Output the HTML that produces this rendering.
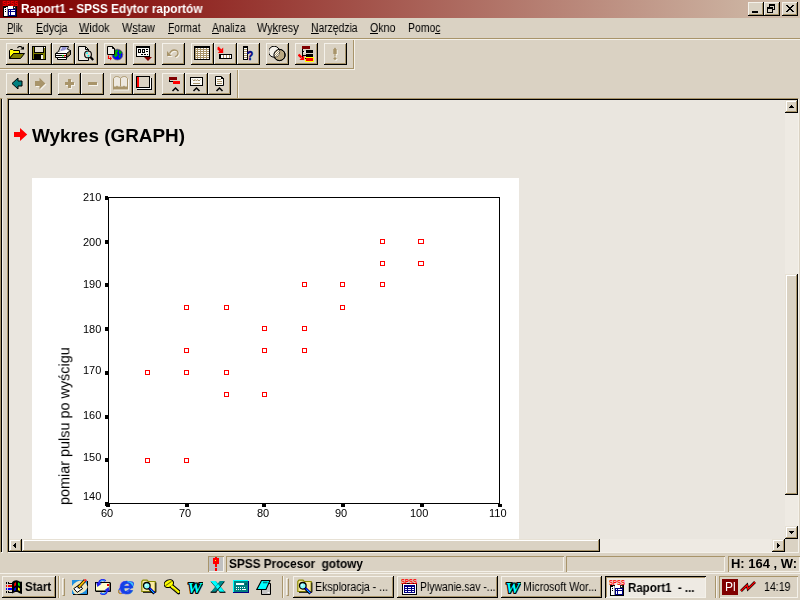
<!DOCTYPE html><html><head><meta charset="utf-8"><title>Raport1 - SPSS Edytor raportów</title><style>
*{margin:0;padding:0;box-sizing:border-box}
html,body{width:800px;height:600px;overflow:hidden;background:#DAD2C3;font-family:"Liberation Sans", sans-serif;font-size:12px;color:#000}
.a{position:absolute}
.t{position:absolute;white-space:pre;transform-origin:0 0;line-height:1;will-change:transform}
.rb{position:absolute;background:#DAD2C3;box-shadow:inset -1px -1px 0 #000000,inset 1px 1px 0 #F4F1EA,inset -2px -2px 0 #A8946A}
.sb{position:absolute;background:#DAD2C3;box-shadow:inset -1px -1px 0 #000000,inset 1px 1px 0 #E7E1D5,inset -2px -2px 0 #A8946A,inset 2px 2px 0 #fff}
.sk{position:absolute;box-shadow:inset 1px 1px 0 #A8946A,inset -1px -1px 0 #F4F1EA}
.tb{position:absolute;width:23px;height:22px;background:#DAD2C3;box-shadow:inset -1px -1px 0 #000000,inset 1px 1px 0 #F4F1EA,inset -2px -2px 0 #A8946A}
.tb svg{position:absolute;left:3px;top:3px}
.h{position:absolute;height:1px}
.v{position:absolute;width:1px}
u{position:relative;text-decoration:none}
u::after{content:"";position:absolute;left:0;right:0;top:11.9px;height:1px;background:#000}
</style></head><body>
<div class="a" style="left:0;top:0;width:800px;height:18px;background:linear-gradient(to right,#800000 0,#800000 32px,#D1BFAC 800px)"></div>
<svg class="a" style="left:2px;top:1px" width="16" height="16"><g shape-rendering="crispEdges"><rect x="1" y="5" width="14" height="11" fill="#000"/><rect x="2" y="6" width="3" height="9" fill="#fff"/><rect x="5" y="6" width="1" height="9" fill="#9A9A9A"/><rect x="6" y="5" width="5" height="3" fill="#fff"/><rect x="11" y="5" width="3" height="3" fill="#222"/><rect x="12" y="6" width="1" height="1" fill="#fff"/><rect x="3" y="8" width="1" height="1" fill="#000"/><rect x="3" y="10" width="1" height="1" fill="#000"/><rect x="2" y="6" width="2" height="1" fill="#000"/><rect x="6" y="8" width="8" height="7" fill="#000080"/><rect x="7" y="9" width="1" height="1" fill="#fff"/><rect x="9" y="9" width="4" height="1" fill="#fff"/><rect x="7" y="11" width="1" height="3" fill="#fff"/><rect x="9" y="11" width="4" height="3" fill="#fff"/></g><text x="0" y="5" font-family="Liberation Sans, sans-serif" font-weight="bold" font-size="6.5" fill="#f00" textLength="16" lengthAdjust="spacingAndGlyphs">SPSS</text></svg>
<div class="rb" style="left:748px;top:2px;width:16px;height:14px"></div>
<div class="rb" style="left:764px;top:2px;width:16px;height:14px"></div>
<div class="rb" style="left:782px;top:2px;width:16px;height:14px"></div>
<div class="a" style="left:752px;top:11px;width:6px;height:2px;background:#000"></div>
<svg class="a" style="left:764px;top:2px" width="16" height="14" shape-rendering="crispEdges" fill="#000"><rect x="5" y="2" width="6" height="2"/><rect x="10" y="2" width="1" height="6"/><rect x="5" y="2" width="1" height="3"/><rect x="9" y="7" width="2" height="1"/><rect x="3" y="5" width="6" height="2"/><rect x="3" y="5" width="1" height="6"/><rect x="8" y="5" width="1" height="6"/><rect x="3" y="10" width="6" height="1"/></svg>
<svg class="a" style="left:782px;top:2px" width="16" height="14" shape-rendering="crispEdges" fill="#000"><rect x="4" y="3" width="2" height="1"/><rect x="10" y="3" width="2" height="1"/><rect x="5" y="4" width="2" height="1"/><rect x="9" y="4" width="2" height="1"/><rect x="6" y="5" width="4" height="1"/><rect x="7" y="6" width="2" height="1"/><rect x="6" y="7" width="4" height="1"/><rect x="5" y="8" width="2" height="1"/><rect x="9" y="8" width="2" height="1"/><rect x="4" y="9" width="2" height="1"/><rect x="10" y="9" width="2" height="1"/></svg>
<div class="h" style="left:0;top:38px;width:800px;background:#A8946A"></div>
<div class="h" style="left:0;top:39px;width:800px;background:#F4F1EA"></div>
<div class="h" style="left:0;top:68px;width:354px;background:#A8946A"></div>
<div class="h" style="left:0;top:69px;width:355px;background:#F4F1EA"></div>
<div class="v" style="left:353px;top:40px;height:29px;background:#A8946A"></div>
<div class="v" style="left:354px;top:40px;height:30px;background:#F4F1EA"></div>
<div class="v" style="left:237px;top:70px;height:28px;background:#A8946A"></div>
<div class="v" style="left:238px;top:70px;height:28px;background:#F4F1EA"></div>
<div class="tb" style="left:6px;top:43px"><svg width="17" height="17" viewBox="0 0 17 17"><path d="M0.5 12.5V4.5L1.5 3.5H3.5L4.5 4.5H10.5V7.5H4.5Z" fill="#ff0" stroke="#000"/><path d="M0.5 12.5L4.5 7.5H15.5L11.5 12.5Z" fill="#808000" stroke="#000"/><path d="M8.5 2C9.5 -0.2 12.8 -0.2 13.6 2.6" stroke="#000" fill="none" stroke-width="1.1"/><path d="M11.3 3.6H15V0.4Z" fill="#000"/></svg></div>
<div class="tb" style="left:29px;top:43px"><svg width="17" height="17" viewBox="0 0 17 17" shape-rendering="crispEdges"><rect x="0" y="0" width="14" height="14" fill="#000"/><rect x="1" y="1" width="12" height="12" fill="#808000"/><rect x="3" y="1" width="8" height="6" fill="#E6E0D4"/><rect x="2" y="1" width="1" height="6" fill="#000"/><rect x="11" y="1" width="1" height="6" fill="#000"/><rect x="2" y="6" width="10" height="1" fill="#000"/><rect x="3" y="8" width="8" height="5" fill="#000"/><rect x="9" y="9" width="2" height="4" fill="#F4F0E8"/><rect x="12" y="1" width="1" height="1" fill="#fff"/><rect x="2" y="8" width="1" height="5" fill="#000"/></svg></div>
<div class="tb" style="left:52px;top:43px"><svg width="17" height="17" viewBox="0 0 17 17"><path d="M5.5 0.5H13.5L11.5 5.5H3.5Z" fill="#fff" stroke="#000"/><path d="M6.6 2H11.6M5.6 4H10.6" stroke="#1010A0" stroke-width="0.9"/><path d="M3.5 5.5L0.5 7.5V11.5H2.5V13.5H11.5V11.5L15.5 8.5V4.5L13 3.5" fill="#fff" stroke="#000"/><path d="M11.5 11.5V7.5L15.5 4.5V8.5Z" fill="#8A7850" stroke="#000"/><path d="M0.5 7.5H11.5M1 9.5H11M2.5 11.5H11.5" stroke="#000"/><rect x="7" y="9" width="1.5" height="1.5" fill="#0c0"/><rect x="9" y="9" width="1.5" height="1.5" fill="#f00"/></svg></div>
<div class="tb" style="left:75px;top:43px"><svg width="17" height="17" viewBox="0 0 17 17"><path d="M0.5 0.5H7.5L10.5 3.5V14.5H0.5Z" fill="#EFEBE4" stroke="#000"/><path d="M7.5 0.5V3.5H10.5" fill="none" stroke="#000"/><circle cx="10" cy="8.4" r="3.4" fill="#E8D8CC" stroke="#000" stroke-width="1.1"/><rect x="8.2" y="6.3" width="1.6" height="1.6" fill="#0ff"/><rect x="9.6" y="9" width="1.6" height="1.6" fill="#0ff"/><path d="M12.4 10.9L15.2 14" stroke="#000" stroke-width="2.2"/></svg></div>
<div class="tb" style="left:104px;top:43px"><svg width="17" height="17" viewBox="0 0 17 17"><circle cx="10.4" cy="8.6" r="5.4" fill="#00f" stroke="#7A6A50" stroke-width="0.8"/><path d="M7.5 5L10 3.4L11.5 5L9.8 7L11 9L8.5 11.6L6.6 9.5L8 8Z" fill="#0a0"/><path d="M12 4L15 6L13.8 8.4L12 7.4Z" fill="#0a0"/><path d="M11.5 9.5L14 9.2L12.6 12.6Z" fill="#0a0"/><path d="M0.5 0.5H5.5L7.5 2.5V8.5H0.5Z" fill="#EFEBE4" stroke="#000"/><path d="M5.5 0.5V2.5H7.5" fill="none" stroke="#000"/><path d="M1.5 9.5V12.5H4" fill="none" stroke="#f00" stroke-width="1.2"/><path d="M3 10.5L5 12.5L3 14.5Z" fill="#f00"/></svg></div>
<div class="tb" style="left:133px;top:43px"><svg width="17" height="17" viewBox="0 0 17 17" shape-rendering="crispEdges"><rect x="0" y="0" width="14" height="11" fill="#000"/><rect x="1" y="2" width="12" height="8" fill="#FBFAF6"/><rect x="2" y="3" width="3" height="4" fill="#000"/><rect x="3" y="4" width="1" height="2" fill="#FBFAF6"/><rect x="6" y="3" width="3" height="4" fill="#000"/><rect x="7" y="4" width="1" height="2" fill="#FBFAF6"/><rect x="10" y="3" width="2" height="1" fill="#000"/><rect x="10" y="5" width="2" height="1" fill="#000"/><rect x="5" y="8" width="2" height="1" fill="#000"/><rect x="8" y="8" width="2" height="1" fill="#000"/><rect x="10.5" y="8" width="1.5" height="1" fill="#000"/><path d="M8 11H16L12 15Z" fill="#800000" shape-rendering="auto"/></svg></div>
<div class="tb" style="left:162px;top:43px"><svg width="17" height="17" viewBox="0 0 17 17"><g transform="translate(1,1)"><path d="M2 5V10H6.8Z" fill="#F6F3EC"/><path d="M4.5 7.5C6 4.5 9 3.6 11.3 4.4C13.6 5.4 13.6 8.6 11.5 10L10 10.6" fill="none" stroke="#F6F3EC" stroke-width="1.3"/></g><g transform="translate(0,0)"><path d="M2 5V10H6.8Z" fill="#A8946A"/><path d="M4.5 7.5C6 4.5 9 3.6 11.3 4.4C13.6 5.4 13.6 8.6 11.5 10L10 10.6" fill="none" stroke="#A8946A" stroke-width="1.3"/></g></svg></div>
<div class="tb" style="left:191px;top:43px"><svg width="17" height="17" viewBox="0 0 17 17" shape-rendering="crispEdges"><rect x="0" y="0" width="16" height="14" fill="#000"/><rect x="1" y="2" width="14" height="11" fill="#A8946A"/><rect x="1.5" y="2" width="1.5" height="1" fill="#fff"/><rect x="1.5" y="4" width="1.5" height="1" fill="#fff"/><rect x="1.5" y="6" width="1.5" height="1" fill="#fff"/><rect x="1.5" y="8" width="1.5" height="1" fill="#fff"/><rect x="1.5" y="10" width="1.5" height="1" fill="#fff"/><rect x="1.5" y="12" width="1.5" height="1" fill="#fff"/><rect x="4" y="2" width="2" height="1" fill="#fff"/><rect x="4" y="4" width="2" height="1" fill="#fff"/><rect x="4" y="6" width="2" height="1" fill="#fff"/><rect x="4" y="8" width="2" height="1" fill="#fff"/><rect x="4" y="10" width="2" height="1" fill="#fff"/><rect x="4" y="12" width="2" height="1" fill="#fff"/><rect x="7" y="2" width="2" height="1" fill="#fff"/><rect x="7" y="4" width="2" height="1" fill="#fff"/><rect x="7" y="6" width="2" height="1" fill="#fff"/><rect x="7" y="8" width="2" height="1" fill="#fff"/><rect x="7" y="10" width="2" height="1" fill="#fff"/><rect x="7" y="12" width="2" height="1" fill="#fff"/><rect x="10" y="2" width="2" height="1" fill="#fff"/><rect x="10" y="4" width="2" height="1" fill="#fff"/><rect x="10" y="6" width="2" height="1" fill="#fff"/><rect x="10" y="8" width="2" height="1" fill="#fff"/><rect x="10" y="10" width="2" height="1" fill="#fff"/><rect x="10" y="12" width="2" height="1" fill="#fff"/><rect x="13" y="2" width="2" height="1" fill="#fff"/><rect x="13" y="4" width="2" height="1" fill="#fff"/><rect x="13" y="6" width="2" height="1" fill="#fff"/><rect x="13" y="8" width="2" height="1" fill="#fff"/><rect x="13" y="10" width="2" height="1" fill="#fff"/><rect x="13" y="12" width="2" height="1" fill="#fff"/></svg></div>
<div class="tb" style="left:214px;top:43px"><svg width="17" height="17" viewBox="0 0 17 17" shape-rendering="crispEdges"><path d="M1 2L3.5 4.5" stroke="#f00" stroke-width="2.6" shape-rendering="auto"/><path d="M6.2 1.6V7H0.8Z" fill="#f00" shape-rendering="auto"/><path d="M0.2 1.2L2.4 0.4L1.6 2.6Z" fill="#f00" shape-rendering="auto"/><rect x="2" y="8" width="13" height="5" fill="#000"/><rect x="4" y="9" width="10" height="3" fill="#A8946A"/><rect x="4" y="9" width="2" height="3" fill="#fff"/><rect x="7" y="9" width="2" height="3" fill="#fff"/><rect x="10" y="9" width="2" height="3" fill="#fff"/><rect x="13" y="9" width="1" height="3" fill="#fff"/></svg></div>
<div class="tb" style="left:237px;top:43px"><svg width="17" height="17" viewBox="0 0 17 17" shape-rendering="crispEdges"><rect x="3" y="0" width="5" height="14" fill="#000"/><rect x="4" y="2" width="3" height="11" fill="#A8946A"/><rect x="4" y="2" width="3" height="1" fill="#fff"/><rect x="4" y="4" width="3" height="1" fill="#fff"/><rect x="4" y="6" width="3" height="1" fill="#fff"/><rect x="4" y="8" width="3" height="1" fill="#fff"/><rect x="4" y="10" width="3" height="1" fill="#fff"/><rect x="4" y="12" width="3" height="1" fill="#fff"/><text x="7" y="14.2" font-family="Liberation Sans, sans-serif" font-weight="bold" font-size="13" fill="#000080" stroke="#000080" stroke-width="0.5" shape-rendering="auto" textLength="6.2" lengthAdjust="spacingAndGlyphs">?</text></svg></div>
<div class="tb" style="left:266px;top:43px"><svg width="17" height="17" viewBox="0 0 17 17"><defs><pattern id="ck" width="2" height="2" patternUnits="userSpaceOnUse"><rect width="2" height="2" fill="#fff"/><rect width="1" height="1" fill="#A8946A"/><rect x="1" y="1" width="1" height="1" fill="#A8946A"/></pattern><clipPath id="c1"><circle cx="5.1" cy="5.7" r="5.5"/></clipPath></defs><circle cx="10.5" cy="9" r="5.6" fill="#BBA983" stroke="#000" stroke-width="1"/><circle cx="5.1" cy="5.7" r="5.5" fill="#F4F1EA" stroke="#000" stroke-width="1"/><circle cx="10.5" cy="9" r="5.6" fill="url(#ck)" clip-path="url(#c1)"/><circle cx="10.5" cy="9" r="5.6" fill="none" stroke="#000" stroke-width="1"/></svg></div>
<div class="tb" style="left:295px;top:43px"><svg width="17" height="17" viewBox="0 0 17 17" shape-rendering="crispEdges"><rect x="4" y="0" width="8" height="3" fill="#800000"/><rect x="4" y="3" width="1" height="10" fill="#000"/><rect x="4" y="5" width="4" height="1" fill="#000"/><rect x="4" y="9" width="4" height="1" fill="#000"/><rect x="8" y="4" width="7" height="3" fill="#000"/><rect x="8" y="8" width="7" height="3" fill="#000"/><rect x="5.5" y="5" width="2" height="2" fill="#EFEBE4"/><rect x="7" y="11" width="9" height="5" fill="#ff0"/><rect x="8" y="12" width="7" height="3" fill="#f00"/><path d="M0.5 8.5L3.5 11.5" stroke="#f00" stroke-width="2.4" shape-rendering="auto"/><path d="M6.2 9.4V14H1.4Z" fill="#f00" shape-rendering="auto"/><rect x="7" y="12" width="1" height="1" fill="#000"/></svg></div>
<div class="tb" style="left:324px;top:43px"><svg width="17" height="17" viewBox="0 0 17 17"><g transform="translate(1,1)"><path d="M7 2.5L8 1.5L9 2.5V8H8.6V10.4H7.4V8H7Z M6.3 3H9.7V8H6.3Z" fill="#F6F3EC"/><path d="M8 11L9.8 12.6L8 14.2L6.2 12.6Z" fill="#F6F3EC"/></g><g transform="translate(0,0)"><path d="M7 2.5L8 1.5L9 2.5V8H8.6V10.4H7.4V8H7Z M6.3 3H9.7V8H6.3Z" fill="#A8946A"/><path d="M8 11L9.8 12.6L8 14.2L6.2 12.6Z" fill="#A8946A"/></g></svg></div>
<div class="tb" style="left:6px;top:73px"><svg width="17" height="17" viewBox="0 0 17 17"><path d="M3 7.5L9 2V5H13V10H9V13Z" fill="#008080" stroke="#000" stroke-width="1" stroke-linejoin="miter"/></svg></div>
<div class="tb" style="left:29px;top:73px"><svg width="17" height="17" viewBox="0 0 17 17"><path transform="translate(1,1)" d="M13.5 7.5L7.5 1.8V5H3V10H7.5V13.2Z" fill="#F6F3EC"/><path transform="translate(0,0)" d="M13.5 7.5L7.5 1.8V5H3V10H7.5V13.2Z" fill="#A8946A"/></svg></div>
<div class="tb" style="left:58px;top:73px"><svg width="17" height="17" viewBox="0 0 17 17" shape-rendering="crispEdges"><rect x="5" y="7" width="9" height="3" fill="#F6F3EC"/><rect x="8" y="4" width="3" height="9" fill="#F6F3EC"/><rect x="4" y="6" width="9" height="3" fill="#A8946A"/><rect x="7" y="3" width="3" height="9" fill="#A8946A"/></svg></div>
<div class="tb" style="left:81px;top:73px"><svg width="17" height="17" viewBox="0 0 17 17" shape-rendering="crispEdges"><rect x="5" y="7" width="9" height="3" fill="#F6F3EC"/><rect x="4" y="6" width="9" height="3" fill="#A8946A"/></svg></div>
<div class="tb" style="left:110px;top:73px"><svg width="17" height="17" viewBox="0 0 17 17"><g transform="translate(1,1)"><path d="M0.5 11V2.5C1.5 1 2.5 0.5 3.5 0.5C5 0.5 6.5 1 7.5 2.5C8.5 1 10 0.5 11.5 0.5C12.5 0.5 13.5 1 14.5 2.5V11" fill="none" stroke="#F6F3EC" stroke-width="1"/><path d="M7.5 2.5V10.5" stroke="#F6F3EC"/><path d="M0 10.5H3L4 9.5L5 10.5H10L11 9.5L12 10.5H15V13.5H0Z" fill="#F6F3EC"/></g><g transform="translate(0,0)"><path d="M0.5 11V2.5C1.5 1 2.5 0.5 3.5 0.5C5 0.5 6.5 1 7.5 2.5C8.5 1 10 0.5 11.5 0.5C12.5 0.5 13.5 1 14.5 2.5V11" fill="#EDE8DF" stroke="#A8946A" stroke-width="1"/><path d="M7.5 2.5V10.5" stroke="#A8946A"/><path d="M0 10.5H3L4 9.5L5 10.5H10L11 9.5L12 10.5H15V13.5H0Z" fill="#A8946A"/></g></svg></div>
<div class="tb" style="left:133px;top:73px"><svg width="17" height="17" viewBox="0 0 17 17" shape-rendering="crispEdges"><rect x="1" y="2" width="15" height="12" fill="#000"/><rect x="2" y="3" width="13" height="10" fill="#fff"/><rect x="0" y="0" width="14" height="12" fill="#000"/><rect x="1" y="1" width="12" height="10" fill="#DAD2C3"/><rect x="1" y="1" width="2" height="10" fill="#f00"/><rect x="14" y="2" width="1" height="11" fill="#fff"/><rect x="15" y="2" width="1" height="12" fill="#000"/><rect x="1" y="12" width="14" height="1" fill="#fff"/></svg></div>
<div class="tb" style="left:162px;top:73px"><svg width="17" height="17" viewBox="0 0 17 17" shape-rendering="crispEdges"><rect x="4" y="1" width="8" height="3" fill="#800000"/><rect x="4" y="4" width="1" height="2" fill="#000"/><rect x="4" y="5" width="4" height="1" fill="#000"/><rect x="8" y="5" width="7" height="3" fill="#f00"/><path d="M7.5 15L10.5 12L13.5 15" fill="none" stroke="#000" stroke-width="1.5" shape-rendering="auto"/></svg></div>
<div class="tb" style="left:185px;top:73px"><svg width="17" height="17" viewBox="0 0 17 17" shape-rendering="crispEdges"><rect x="2" y="1" width="13" height="9" fill="#000"/><rect x="3" y="2" width="11" height="7" fill="#FBFAF6"/><path d="M4.5 3.5L6 5L7 3.5L8.5 5L9.5 3.5L11 5L12.5 3.5" fill="none" stroke="#A8946A" shape-rendering="auto"/><rect x="4.5" y="7" width="7.5" height="1" fill="#A8946A"/><path d="M5.5 15L8.5 12L11.5 15" fill="none" stroke="#000" stroke-width="1.5" shape-rendering="auto"/></svg></div>
<div class="tb" style="left:208px;top:73px"><svg width="17" height="17" viewBox="0 0 17 17" shape-rendering="crispEdges"><path d="M4.5 0.5H10.5L12.5 2.5V9.5H4.5Z" fill="#FBFAF6" stroke="#000" shape-rendering="auto"/><path d="M10.5 0.5V2.5H12.5" fill="none" stroke="#000"/><rect x="6" y="3" width="4" height="1" fill="#A8946A"/><rect x="6" y="5" width="5" height="1" fill="#A8946A"/><rect x="6" y="7" width="5" height="1" fill="#A8946A"/><path d="M5.5 15L8.5 12L11.5 15" fill="none" stroke="#000" stroke-width="1.5" shape-rendering="auto"/></svg></div>
<div class="a" style="left:0;top:98px;width:3px;height:455px;background:#000000;border-left:1px solid #A8946A;border-top:1px solid #A8946A;border-right:1px solid #F4F1EA;border-bottom:1px solid #F4F1EA"></div>
<div class="a" style="left:7px;top:98px;width:792px;height:455px;background:#EAE6DF;border-left:1px solid #A8946A;border-top:1px solid #A8946A;border-right:1px solid #F4F1EA;border-bottom:1px solid #F4F1EA"></div>
<div class="a" style="left:8px;top:99px;width:790px;height:453px;border-left:1px solid #000000;border-top:1px solid #000000;"></div>
<svg class="a" style="left:13px;top:127px" width="16" height="16"><path d="M1 5h6V1l7.2 6.5L7 14V10H1z" fill="#f00"/></svg>
<div class="a" style="left:32px;top:178px;width:487px;height:361px;background:#fff"></div>
<svg class="a" style="left:32px;top:178px" width="487" height="361" shape-rendering="crispEdges">
<rect x="76" y="19" width="1" height="307" fill="#000"/>
<rect x="467" y="19" width="1" height="307" fill="#000"/>
<rect x="76" y="19" width="392" height="1" fill="#000"/>
<rect x="76" y="325" width="392" height="1" fill="#000"/>
<rect x="73" y="18" width="3" height="4" fill="#000"/>
<rect x="73" y="62" width="3" height="4" fill="#000"/>
<rect x="73" y="105" width="3" height="4" fill="#000"/>
<rect x="73" y="149" width="3" height="4" fill="#000"/>
<rect x="73" y="193" width="3" height="4" fill="#000"/>
<rect x="73" y="237" width="3" height="4" fill="#000"/>
<rect x="73" y="280" width="3" height="4" fill="#000"/>
<rect x="73" y="324" width="3" height="4" fill="#000"/>
<rect x="74" y="326" width="4" height="3" fill="#000"/>
<rect x="153" y="326" width="4" height="3" fill="#000"/>
<rect x="230" y="326" width="4" height="3" fill="#000"/>
<rect x="309" y="326" width="4" height="3" fill="#000"/>
<rect x="388" y="326" width="4" height="3" fill="#000"/>
<rect x="466" y="326" width="4" height="3" fill="#000"/>
<rect x="113.5" y="192.5" width="4" height="4" fill="none" stroke="#f00" stroke-width="1"/>
<rect x="113.5" y="280.5" width="4" height="4" fill="none" stroke="#f00" stroke-width="1"/>
<rect x="152.5" y="127.5" width="4" height="4" fill="none" stroke="#f00" stroke-width="1"/>
<rect x="152.5" y="170.5" width="4" height="4" fill="none" stroke="#f00" stroke-width="1"/>
<rect x="152.5" y="192.5" width="4" height="4" fill="none" stroke="#f00" stroke-width="1"/>
<rect x="152.5" y="280.5" width="4" height="4" fill="none" stroke="#f00" stroke-width="1"/>
<rect x="192.5" y="127.5" width="4" height="4" fill="none" stroke="#f00" stroke-width="1"/>
<rect x="192.5" y="192.5" width="4" height="4" fill="none" stroke="#f00" stroke-width="1"/>
<rect x="192.5" y="214.5" width="4" height="4" fill="none" stroke="#f00" stroke-width="1"/>
<rect x="230.5" y="148.5" width="4" height="4" fill="none" stroke="#f00" stroke-width="1"/>
<rect x="230.5" y="170.5" width="4" height="4" fill="none" stroke="#f00" stroke-width="1"/>
<rect x="230.5" y="214.5" width="4" height="4" fill="none" stroke="#f00" stroke-width="1"/>
<rect x="270.5" y="104.5" width="4" height="4" fill="none" stroke="#f00" stroke-width="1"/>
<rect x="270.5" y="148.5" width="4" height="4" fill="none" stroke="#f00" stroke-width="1"/>
<rect x="270.5" y="170.5" width="4" height="4" fill="none" stroke="#f00" stroke-width="1"/>
<rect x="308.5" y="104.5" width="4" height="4" fill="none" stroke="#f00" stroke-width="1"/>
<rect x="308.5" y="127.5" width="4" height="4" fill="none" stroke="#f00" stroke-width="1"/>
<rect x="348.5" y="61.5" width="4" height="4" fill="none" stroke="#f00" stroke-width="1"/>
<rect x="348.5" y="83.5" width="4" height="4" fill="none" stroke="#f00" stroke-width="1"/>
<rect x="348.5" y="104.5" width="4" height="4" fill="none" stroke="#f00" stroke-width="1"/>
<rect x="386.5" y="61.5" width="5" height="4" fill="none" stroke="#f00" stroke-width="1"/>
<rect x="386.5" y="83.5" width="5" height="4" fill="none" stroke="#f00" stroke-width="1"/>
</svg>
<div class="a" style="left:785px;top:100px;width:13px;height:439px;background:#EEEAE3"></div>
<div class="sb" style="left:785px;top:100px;width:13px;height:13px"></div>
<div class="sb" style="left:785px;top:526px;width:13px;height:13px"></div>
<div class="sb" style="left:785px;top:274px;width:13px;height:221px"></div>
<svg class="a" style="left:785px;top:100px" width="13" height="13" shape-rendering="crispEdges"><path d="M4 8h5v-1h-1v-1h-1v-1h-1v1h-1v1h-1z" fill="#000"/></svg>
<svg class="a" style="left:785px;top:526px" width="13" height="13" shape-rendering="crispEdges"><path d="M4 5h5v1h-1v1h-1v1h-1v-1h-1v-1h-1z" fill="#000"/></svg>
<div class="a" style="left:9px;top:539px;width:776px;height:13px;background:#EEEAE3"></div>
<div class="a" style="left:785px;top:539px;width:13px;height:13px;background:#DAD2C3"></div>
<div class="sb" style="left:9px;top:539px;width:13px;height:13px"></div>
<div class="sb" style="left:772px;top:539px;width:13px;height:13px"></div>
<div class="sb" style="left:22px;top:539px;width:578px;height:13px"></div>
<svg class="a" style="left:9px;top:539px" width="13" height="13" shape-rendering="crispEdges"><path d="M7 4v5h-1v-1h-1v-1h-1v-1h1v-1h1v-1z" fill="#000"/></svg>
<svg class="a" style="left:772px;top:539px" width="13" height="13" shape-rendering="crispEdges"><path d="M5 4v5h1v-1h1v-1h1v-1h-1v-1h-1v-1z" fill="#000"/></svg>
<div class="sk" style="left:208px;top:556px;width:16px;height:16px"></div>
<div class="a" style="left:209px;top:557px;width:14px;height:14px;background:#C0C0C0"></div>
<svg class="a" style="left:208px;top:556px" width="16" height="16" shape-rendering="crispEdges"><rect x="7" y="1" width="2" height="1" fill="#f00"/><rect x="5" y="2" width="6" height="6" fill="#f00"/><rect x="7" y="8" width="2" height="3" fill="#f00"/><rect x="7" y="12" width="2" height="3" fill="#f00"/><rect x="7" y="4" width="1" height="1" fill="#ff0"/></svg>
<div class="sk" style="left:226px;top:556px;width:338px;height:16px"></div>
<div class="sk" style="left:566px;top:556px;width:159px;height:16px"></div>
<div class="sk" style="left:728px;top:556px;width:72px;height:16px"></div>
<div class="h" style="left:0;top:573px;width:800px;background:#F4F1EA"></div>
<div class="rb" style="left:2px;top:576px;width:54px;height:22px"></div>
<svg class="a" style="left:6px;top:580px" width="17" height="15"><g shape-rendering="crispEdges"><rect x="0" y="2" width="1" height="2" fill="#000"/><rect x="0" y="5" width="1" height="2" fill="#f00"/><rect x="0" y="8" width="1" height="2" fill="#00f"/><rect x="0" y="11" width="1" height="2" fill="#000"/><rect x="2" y="3" width="4" height="1" fill="#000"/><rect x="2" y="5" width="4" height="2" fill="#f00"/><rect x="2" y="8" width="4" height="2" fill="#00f"/><rect x="2" y="12" width="4" height="1" fill="#000"/><rect x="2" y="2" width="1" height="1" fill="#000"/><rect x="2" y="11" width="1" height="1" fill="#000"/></g><path d="M6 2.5C7.5 0.5 10.5 -0.5 12.2 0.8C13.5 1.8 15 2 16 1.4V14C15 13.6 13.5 13.4 12.2 12.4C10.5 11.4 8 12 6 13.6Z" fill="#000"/><path d="M8.2 3.4L10 2V5.2L8.2 6.4Z" fill="#f00"/><path d="M12 2.2L13.8 3.4V6.4L12 5.2Z" fill="#0e0"/><path d="M8.2 8.4L10 7.2V10L8.2 11.2Z" fill="#00f"/><path d="M12 7.2L13.8 8.4V11.2L12 10Z" fill="#ff0"/></svg>
<div class="v" style="left:58px;top:576px;height:22px;background:#A8946A"></div>
<div class="v" style="left:59px;top:576px;height:22px;background:#F4F1EA"></div>
<div class="a" style="left:62px;top:578px;width:3px;height:18px;background:#DAD2C3;border-left:1px solid #F4F1EA;border-top:1px solid #F4F1EA;border-right:1px solid #A8946A;border-bottom:1px solid #A8946A"></div>
<div class="v" style="left:282px;top:576px;height:22px;background:#A8946A"></div>
<div class="v" style="left:283px;top:576px;height:22px;background:#F4F1EA"></div>
<div class="a" style="left:286px;top:578px;width:3px;height:18px;background:#DAD2C3;border-left:1px solid #F4F1EA;border-top:1px solid #F4F1EA;border-right:1px solid #A8946A;border-bottom:1px solid #A8946A"></div>
<div class="v" style="left:715px;top:576px;height:22px;background:#A8946A"></div>
<div class="v" style="left:716px;top:576px;height:22px;background:#F4F1EA"></div>
<svg class="a" style="left:72px;top:579px" width="16" height="16"><rect x="0" y="1" width="15" height="14" fill="#1E8FE0"/><path d="M15.5 2V15.5H1" fill="none" stroke="#000"/><clipPath id="sdc"><rect x="0" y="1" width="15" height="14"/></clipPath><ellipse cx="7.5" cy="8.3" rx="9" ry="6.2" fill="#EFE8C4" transform="rotate(-28 7.5 8.3)" clip-path="url(#sdc)"/><path d="M1.8 9.6L7.2 5.8L10.6 9.6L5.2 13.4Z" fill="#fff" stroke="#000" stroke-width="1"/><path d="M6.2 8.8L13 1.4" stroke="#000" stroke-width="3.2"/><path d="M6.6 8.4L12.6 1.8" stroke="#F5B800" stroke-width="1.9"/><path d="M5.6 9.6L7.2 8.8L6.2 7.8Z" fill="#000"/><circle cx="13.3" cy="1.3" r="1.3" fill="#f33"/></svg>
<svg class="a" style="left:95px;top:579px" width="16" height="16"><rect x="0.5" y="3.5" width="14.5" height="8.5" fill="#FFC" stroke="#000"/><path d="M1 12.5H15.5V4" fill="none" stroke="#000" stroke-width="1"/><rect x="12" y="5" width="2" height="2" fill="#e00"/><path d="M10.5 2.2C8.5 0 5 0.6 3.6 4.4" fill="none" stroke="#22e" stroke-width="2"/><path d="M9.8 1.8C8 0.8 6 1.2 4.8 3.2" fill="none" stroke="#3CF" stroke-width="0.9"/><path d="M1.2 3.4L6.8 4.6L2.4 8Z" fill="#22e"/><path d="M5.5 13.8C7.5 16 11 15.4 12.4 11.6" fill="none" stroke="#22e" stroke-width="2"/><path d="M6.2 14.2C8 15.2 10 14.8 11.2 12.8" fill="none" stroke="#3CF" stroke-width="0.9"/><path d="M14.8 12.6L9.2 11.4L13.6 8Z" fill="#22e"/></svg>
<svg class="a" style="left:118px;top:579px" width="16" height="16"><ellipse cx="8" cy="8.6" rx="8.6" ry="3.6" fill="none" stroke="#2a5cf0" stroke-width="1.3" transform="rotate(-35 8 8.6)"/><text x="1" y="15" font-family="Liberation Sans, sans-serif" font-weight="bold" font-size="23" fill="#1440e8" stroke="#1440e8" stroke-width="0.5" textLength="14.5" lengthAdjust="spacingAndGlyphs">e</text><path d="M9.5 2.6C12 2.8 14 4.2 14.8 6.4" fill="none" stroke="#3CF" stroke-width="1.4"/><path d="M1 11C0 13.6 1 15.2 3.6 14.6" fill="none" stroke="#e9a000" stroke-width="1"/></svg>
<svg class="a" style="left:141px;top:579px" width="16" height="16"><path d="M0.8 12.5V2.5L2 1.2H6L7.2 2.5H14.2V12.5Z" fill="#FBEBA4" stroke="#8C8C00" stroke-width="1.2"/><path d="M14.9 3.5V13.3H2" fill="none" stroke="#000" stroke-width="1"/><circle cx="5.8" cy="6.8" r="3.3" fill="#8FF" stroke="#000" stroke-width="1.3"/><circle cx="5" cy="6" r="1" fill="#dff"/><path d="M8.4 9.4L13.4 14.4" stroke="#000" stroke-width="2.8"/><path d="M8.6 9.2L13.4 14" stroke="#00f" stroke-width="1.7"/><path d="M9.6 10.6L13 14" stroke="#0ff" stroke-width="0.8"/></svg>
<svg class="a" style="left:164px;top:579px" width="16" height="16"><path d="M8 7.5L14.6 13" stroke="#000" stroke-width="4.6" stroke-linecap="round"/><ellipse cx="4.8" cy="4.6" rx="5.4" ry="4.2" transform="rotate(-25 4.8 4.6)" fill="#000"/><path d="M8 7.5L14.4 12.8" stroke="#ff0" stroke-width="2.4" stroke-linecap="round"/><ellipse cx="4.8" cy="4.6" rx="4.3" ry="3.1" transform="rotate(-25 4.8 4.6)" fill="#ff0"/><path d="M1.6 6.6L7.6 2.4" stroke="#6B6B00" stroke-width="1.1"/><path d="M9.4 9.6L13.6 13" stroke="#9A9A00" stroke-width="0.8"/></svg>
<svg class="a" style="left:187px;top:579px" width="16" height="16"><text x="0.5" y="14" font-family="Liberation Serif, serif" font-weight="bold" font-style="italic" font-size="14.5" fill="#0ff" stroke="#000" stroke-width="2.2" paint-order="stroke" textLength="14.5" lengthAdjust="spacingAndGlyphs">W</text></svg>
<svg class="a" style="left:210px;top:579px" width="16" height="16"><path d="M0.5 2.5H6L15.5 13.5H10Z" fill="#000"/><path d="M0.5 2H5.5L15 13H10Z" fill="#0ff"/><path d="M15 2.5L9.8 2.5L0.8 13.6H6Z" fill="#000"/><path d="M14.5 2H10L1 13H5.5Z" fill="#008B8B"/><path d="M5.6 7.6L8 5L10 7.4L7.6 10Z" fill="#0ff"/><path d="M0.5 13.2H6.5M9.5 13.2H15.5" stroke="#000" stroke-width="1"/></svg>
<svg class="a" style="left:233px;top:579px" width="16" height="16"><g shape-rendering="crispEdges"><rect x="1" y="2" width="15" height="12" fill="#000080"/><rect x="0" y="1" width="15" height="12" fill="#0ff"/><rect x="1" y="2" width="14" height="11" fill="#008080"/><rect x="3" y="4" width="8" height="2" fill="#fff"/><rect x="12" y="4" width="2" height="2" fill="#006060"/><rect x="3" y="8" width="1" height="1" fill="#fff"/><rect x="3" y="10" width="1" height="1" fill="#fff"/><rect x="5" y="8" width="1" height="1" fill="#fff"/><rect x="5" y="10" width="1" height="1" fill="#fff"/><rect x="7" y="8" width="1" height="1" fill="#fff"/><rect x="7" y="10" width="1" height="1" fill="#fff"/><rect x="9" y="8" width="1" height="1" fill="#fff"/><rect x="9" y="10" width="1" height="1" fill="#fff"/><rect x="11" y="8" width="1" height="1" fill="#fff"/><rect x="11" y="10" width="1" height="1" fill="#fff"/><rect x="10" y="10" width="3" height="1" fill="#fff"/><rect x="0" y="13" width="16" height="1" fill="#000080"/></g></svg>
<svg class="a" style="left:256px;top:579px" width="16" height="16"><path d="M5.5 4.5H14.5V15.5H5.5Z" fill="#C4C4C4" stroke="#000"/><path d="M11.5 13.5H13.5" stroke="#fff"/><path d="M5.5 1.5H14L10 10.5H0.8Z" fill="#0ff" stroke="#000" stroke-width="1.1"/><path d="M7 3.5H11.5" stroke="#008080" stroke-width="1.6"/></svg>
<div class="rb" style="left:293px;top:576px;width:101px;height:22px"></div>
<svg class="a" style="left:297px;top:579px" width="16" height="16"><path d="M0.8 12.5V2.5L2 1.2H6L7.2 2.5H14.2V12.5Z" fill="#FBEBA4" stroke="#8C8C00" stroke-width="1.2"/><path d="M14.9 3.5V13.3H2" fill="none" stroke="#000" stroke-width="1"/><circle cx="5.8" cy="6.8" r="3.3" fill="#8FF" stroke="#000" stroke-width="1.3"/><circle cx="5" cy="6" r="1" fill="#dff"/><path d="M8.4 9.4L13.4 14.4" stroke="#000" stroke-width="2.8"/><path d="M8.6 9.2L13.4 14" stroke="#00f" stroke-width="1.7"/><path d="M9.6 10.6L13 14" stroke="#0ff" stroke-width="0.8"/></svg>
<div class="rb" style="left:397px;top:576px;width:101px;height:22px"></div>
<svg class="a" style="left:401px;top:579px" width="16" height="16"><g shape-rendering="crispEdges"><rect x="1" y="4" width="15" height="12" fill="#000"/><rect x="2" y="5" width="13" height="10" fill="#fff"/><rect x="3" y="6" width="11" height="8" fill="#000080"/><rect x="4" y="8" width="2" height="1" fill="#fff"/><rect x="4" y="10" width="2" height="1" fill="#fff"/><rect x="4" y="12" width="2" height="1" fill="#fff"/><rect x="7" y="8" width="3" height="1" fill="#fff"/><rect x="7" y="10" width="3" height="1" fill="#fff"/><rect x="7" y="12" width="3" height="1" fill="#fff"/><rect x="11" y="8" width="2" height="1" fill="#fff"/><rect x="11" y="10" width="2" height="1" fill="#fff"/><rect x="11" y="12" width="2" height="1" fill="#fff"/></g><text x="0" y="5" font-family="Liberation Sans, sans-serif" font-weight="bold" font-size="6.5" fill="#f00" textLength="16" lengthAdjust="spacingAndGlyphs">SPSS</text></svg>
<div class="rb" style="left:501px;top:576px;width:101px;height:22px"></div>
<svg class="a" style="left:505px;top:579px" width="16" height="16"><text x="0.5" y="14" font-family="Liberation Serif, serif" font-weight="bold" font-style="italic" font-size="14.5" fill="#0ff" stroke="#000" stroke-width="2.2" paint-order="stroke" textLength="14.5" lengthAdjust="spacingAndGlyphs">W</text></svg>
<div class="a" style="left:605px;top:576px;width:101px;height:22px;background:#EEEAE3;box-shadow:inset 1px 1px 0 #000000,inset -1px -1px 0 #F4F1EA,inset 2px 2px 0 #A8946A"></div>
<svg class="a" style="left:609px;top:580px" width="16" height="16"><g shape-rendering="crispEdges"><rect x="1" y="5" width="14" height="11" fill="#000"/><rect x="2" y="6" width="3" height="9" fill="#fff"/><rect x="5" y="6" width="1" height="9" fill="#9A9A9A"/><rect x="6" y="5" width="5" height="3" fill="#fff"/><rect x="11" y="5" width="3" height="3" fill="#222"/><rect x="12" y="6" width="1" height="1" fill="#fff"/><rect x="3" y="8" width="1" height="1" fill="#000"/><rect x="3" y="10" width="1" height="1" fill="#000"/><rect x="2" y="6" width="2" height="1" fill="#000"/><rect x="6" y="8" width="8" height="7" fill="#000080"/><rect x="7" y="9" width="1" height="1" fill="#fff"/><rect x="9" y="9" width="4" height="1" fill="#fff"/><rect x="7" y="11" width="1" height="3" fill="#fff"/><rect x="9" y="11" width="4" height="3" fill="#fff"/></g><text x="0" y="5" font-family="Liberation Sans, sans-serif" font-weight="bold" font-size="6.5" fill="#f00" textLength="16" lengthAdjust="spacingAndGlyphs">SPSS</text></svg>
<div class="sk" style="left:719px;top:576px;width:79px;height:22px"></div>
<div class="a" style="left:722px;top:579px;width:16px;height:16px;background:#800000"></div>
<svg class="a" style="left:740px;top:580px" width="16" height="14"><path d="M1 11L7 5L8 9L15 2" fill="none" stroke="#000" stroke-width="2.6"/><path d="M1 11L7 5L8 9L15 2" fill="none" stroke="#f00" stroke-width="1.4"/></svg>
<div class="t" style="left:0;top:0;font-size:14px;transform:translate(57.4px,505px) rotate(-90deg) scaleX(1.029);">pomiar pulsu po wyścigu</div>
<div class="t" id="t0" style="left:21px;top:3.03px;font-size:12px;font-weight:bold;color:#fff;transform:scaleX(0.9862);">Raport1 - SPSS Edytor raportów</div>
<div class="t" id="t1" style="left:7px;top:22.03px;font-size:12px;color:#000;transform:scaleX(0.8058);"><u>P</u>lik</div>
<div class="t" id="t2" style="left:35.5px;top:22.03px;font-size:12px;color:#000;transform:scaleX(0.8742);"><u>E</u>dycja</div>
<div class="t" id="t3" style="left:79px;top:22.03px;font-size:12px;color:#000;transform:scaleX(0.9177);"><u>W</u>idok</div>
<div class="t" id="t4" style="left:122px;top:22.03px;font-size:12px;color:#000;transform:scaleX(0.9163);">W<u>s</u>taw</div>
<div class="t" id="t5" style="left:167.5px;top:22.03px;font-size:12px;color:#000;transform:scaleX(0.8546);"><u>F</u>ormat</div>
<div class="t" id="t6" style="left:211.5px;top:22.03px;font-size:12px;color:#000;transform:scaleX(0.8508);"><u>A</u>naliza</div>
<div class="t" id="t7" style="left:257px;top:22.03px;font-size:12px;color:#000;transform:scaleX(0.9040);">Wy<u>k</u>resy</div>
<div class="t" id="t8" style="left:310.5px;top:22.03px;font-size:12px;color:#000;transform:scaleX(0.8606);"><u>N</u>arzędzia</div>
<div class="t" id="t9" style="left:369.5px;top:22.03px;font-size:12px;color:#000;transform:scaleX(0.8884);"><u>O</u>kno</div>
<div class="t" id="t10" style="left:407.5px;top:22.03px;font-size:12px;color:#000;transform:scaleX(0.8699);">Pomo<u>c</u></div>
<div class="t" id="t11" style="left:32px;top:127.35px;font-size:18px;font-weight:bold;color:#000;transform:scaleX(1.0500);">Wykres (GRAPH)</div>
<div class="t" id="t12" style="left:228.5px;top:558.03px;font-size:12px;font-weight:bold;color:#000;transform:scaleX(0.9850);">SPSS Procesor  gotowy</div>
<div class="t" id="t13" style="left:731px;top:558.03px;font-size:12px;font-weight:bold;color:#000;transform:scaleX(1.0798);">H: 164 , W:</div>
<div class="t" id="t14" style="left:82.5px;top:191.86px;font-size:11px;color:#000;width:18.0px;text-align:right;">210</div>
<div class="t" id="t15" style="left:82.5px;top:236.86px;font-size:11px;color:#000;width:18.0px;text-align:right;">200</div>
<div class="t" id="t16" style="left:82.5px;top:278.86px;font-size:11px;color:#000;width:18.0px;text-align:right;">190</div>
<div class="t" id="t17" style="left:82.5px;top:323.86px;font-size:11px;color:#000;width:18.0px;text-align:right;">180</div>
<div class="t" id="t18" style="left:82.5px;top:364.86px;font-size:11px;color:#000;width:18.0px;text-align:right;">170</div>
<div class="t" id="t19" style="left:82.5px;top:409.86px;font-size:11px;color:#000;width:18.0px;text-align:right;">160</div>
<div class="t" id="t20" style="left:82.5px;top:451.86px;font-size:11px;color:#000;width:18.0px;text-align:right;">150</div>
<div class="t" id="t21" style="left:82.5px;top:491.36px;font-size:11px;color:#000;width:18.0px;text-align:right;">140</div>
<div class="t" id="t22" style="left:100.6px;top:507.86px;font-size:11px;color:#000;">60</div>
<div class="t" id="t23" style="left:178.8px;top:507.86px;font-size:11px;color:#000;">70</div>
<div class="t" id="t24" style="left:257.0px;top:507.86px;font-size:11px;color:#000;">80</div>
<div class="t" id="t25" style="left:335.2px;top:507.86px;font-size:11px;color:#000;">90</div>
<div class="t" id="t26" style="left:410.4px;top:507.86px;font-size:11px;color:#000;">100</div>
<div class="t" id="t27" style="left:488.6px;top:507.86px;font-size:11px;color:#000;">110</div>
<div class="t" id="t28" style="left:25px;top:581.03px;font-size:12px;font-weight:bold;color:#000;transform:scaleX(0.9582);">Start</div>
<div class="t" id="t29" style="left:315px;top:581.03px;font-size:12px;color:#000;transform:scaleX(0.8827);">Eksploracja - ...</div>
<div class="t" id="t30" style="left:419.5px;top:581.03px;font-size:12px;color:#000;transform:scaleX(0.8641);">Plywanie.sav -...</div>
<div class="t" id="t31" style="left:523px;top:581.03px;font-size:12px;color:#000;transform:scaleX(0.8901);">Microsoft Wor...</div>
<div class="t" id="t32" style="left:628px;top:582.03px;font-size:12px;font-weight:bold;color:#000;transform:scaleX(0.9590);">Raport1  - ...</div>
<div class="t" id="t33" style="left:724.5px;top:581.03px;font-size:12px;color:#fff;">Pl</div>
<div class="t" id="t34" style="left:763.5px;top:581.03px;font-size:12px;color:#000;transform:scaleX(0.8824);">14:19</div>
</body></html>
